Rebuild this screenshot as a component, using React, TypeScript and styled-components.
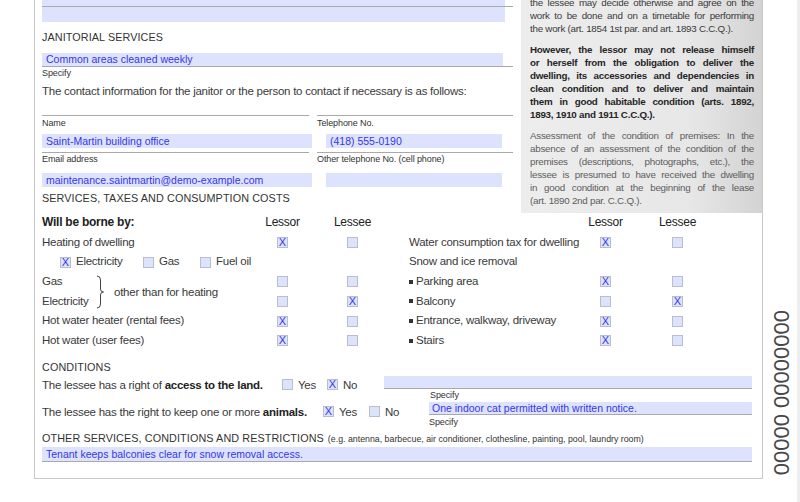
import styled, { createGlobalStyle } from "styled-components";

const SANS = `'Liberation Sans', Arial, sans-serif`;
const FIELD_BG = "#dde3fd";
const INK = "#3535ea";
const RULE = "#a9a9a9";

const GlobalStyle = createGlobalStyle`
  * { box-sizing: border-box; }
  html, body { margin: 0; padding: 0; background: #fff; }
  body {
    font-family: ${SANS};
    color: #3a3a3a;
    font-size: 11.5px;
    letter-spacing: -0.25px;
  }
  b { font-weight: 700; color: #222; }
`;

const Page = styled.div`
  display: flex;
  height: 502px;
  overflow: hidden;
`;

const Sheet = styled.div`
  margin-left: 34px;
  width: 729px;
  align-self: flex-start;
  border: 1px solid #c9c9c9;
  border-top: none;
  padding: 0 0 16px 7px;
`;

const Top = styled.div`
  display: flex;
  gap: 8px;
`;

const LeftCol = styled.div`
  width: 471px;
  display: flex;
  flex-direction: column;
`;

const Aside = styled.aside`
  width: 241px;
  height: 213px;
  overflow: hidden;
  background: linear-gradient(to right, #ededed 0%, #e7e7e7 70%, #d3d3d3 100%);
  padding: 0 8px 0 9px;
  font-size: 9.8px;
  letter-spacing: -0.25px;
  line-height: 13px;
`;

const Para = styled.div<{ $tone: "plain" | "bold" | "muted" }>`
  margin-top: 8px;
  color: ${(p) => (p.$tone === "muted" ? "#5c5c5c" : p.$tone === "bold" ? "#262626" : "#3a3a3a")};
  font-weight: ${(p) => (p.$tone === "bold" ? 700 : 400)};
  &:first-child {
    margin-top: -4px;
  }
`;

const Line = styled.div<{ $last?: boolean }>`
  text-align: justify;
  text-align-last: ${(p) => (p.$last ? "left" : "justify")};
`;

const Heading = styled.div<{ $lh: number; $mt?: number }>`
  font-size: 10.8px;
  letter-spacing: 0.1px;
  text-transform: uppercase;
  color: #333;
  line-height: ${(p) => p.$lh}px;
  margin-top: ${(p) => p.$mt ?? 0}px;
  white-space: nowrap;
`;

const Note = styled.span`
  font-size: 8.8px;
  letter-spacing: 0;
  text-transform: none;
  margin-left: 4px;
`;

const Underlined = styled.div<{ $w?: number }>`
  width: ${(p) => (p.$w ? `${p.$w}px` : "auto")};
  border-bottom: 1px solid ${RULE};
`;

const Field = styled.div<{ $w?: number; $h?: number; $indent?: number; $pad?: number }>`
  width: ${(p) => (p.$w ? `${p.$w}px` : "auto")};
  height: ${(p) => p.$h ?? 14}px;
  margin-left: ${(p) => p.$indent ?? 0}px;
  padding-left: ${(p) => p.$pad ?? 4}px;
  background: ${FIELD_BG};
  font-size: 10.5px;
  letter-spacing: 0;
  line-height: ${(p) => p.$h ?? 14}px;
  color: ${INK};
  white-space: nowrap;
  overflow: hidden;
`;

const Caption = styled.div<{ $lh?: number; $indent?: number; $mt?: number }>`
  font-size: 9px;
  letter-spacing: -0.1px;
  color: #333;
  line-height: ${(p) => p.$lh ?? 12}px;
  padding-left: ${(p) => p.$indent ?? 0}px;
  margin-top: ${(p) => p.$mt ?? 0}px;
  white-space: nowrap;
`;

const Sentence = styled.div<{ $lh?: number; $w?: number }>`
  line-height: ${(p) => p.$lh ?? 20}px;
  width: ${(p) => (p.$w ? `${p.$w}px` : "auto")};
  flex: none;
  white-space: nowrap;
`;

const ContactGrid = styled.div`
  display: grid;
  grid-template-columns: 267px 196px;
  column-gap: 8px;
  row-gap: 4px;
  margin-top: 12px;
`;

const ContactCell = styled.div<{ $top: number; $gap: number }>`
  border-top: 1px solid ${RULE};
  display: flex;
  flex-direction: column;
  padding-top: ${(p) => p.$top}px;
  gap: ${(p) => p.$gap}px;
`;

const Borne = styled.div`
  display: flex;
  gap: 27px;
`;

const Table = styled.div<{ $cols: string }>`
  display: grid;
  grid-template-columns: ${(p) => p.$cols};
  grid-auto-rows: 19.67px;
  align-items: center;
`;

const Cell = styled.div<{ $head?: boolean; $bold?: boolean; $span?: boolean }>`
  line-height: 19.67px;
  white-space: nowrap;
  color: ${(p) => (p.$head ? "#222" : "#3a3a3a")};
  font-size: ${(p) => (p.$head ? "12px" : "11.5px")};
  font-weight: ${(p) => (p.$bold ? 700 : 400)};
  grid-column: ${(p) => (p.$span ? "1 / -1" : "auto")};
  display: flex;
  align-items: center;
  justify-content: ${(p) => (p.$head && !p.$bold ? "center" : "flex-start")};
`;

const CheckCell = styled.div`
  display: flex;
  justify-content: center;
  align-items: center;
`;

const Box = styled.span`
  display: inline-flex;
  align-items: center;
  justify-content: center;
  flex: none;
  width: 11px;
  height: 11px;
  background: ${FIELD_BG};
  border: 1px solid #babdcc;
  font-size: 11px;
  letter-spacing: 0;
  line-height: 1;
  color: ${INK};
`;

const Option = styled.span<{ $w?: number }>`
  display: inline-flex;
  align-items: center;
  gap: 5px;
  flex: none;
  width: ${(p) => (p.$w ? `${p.$w}px` : "auto")};
  white-space: nowrap;
`;

const SubOptions = styled.div`
  grid-column: 1 / -1;
  display: flex;
  align-items: center;
  padding-left: 18px;
  line-height: 19.67px;
`;

const BraceGroup = styled.div`
  grid-row: span 2;
  display: flex;
  align-items: center;
  height: 100%;
`;

const BraceNames = styled.div`
  width: 54px;
  display: flex;
  flex-direction: column;
  line-height: 19.67px;
`;

const BraceText = styled.span`
  margin-left: 10px;
  white-space: nowrap;
`;

const Bullet = styled.span`
  width: 4px;
  height: 4px;
  background: #333;
  margin-right: 3px;
  flex: none;
`;

const Lower = styled.div`
  padding-right: 10px;
`;

const CondRow = styled.div`
  display: flex;
  align-items: flex-start;
`;

const Options = styled.div<{ $h: number }>`
  display: flex;
  align-items: center;
  height: ${(p) => p.$h}px;
`;

const FieldCol = styled.div<{ $gap: number }>`
  flex: 1;
  margin-left: ${(p) => p.$gap}px;
  display: flex;
  flex-direction: column;
`;

const Side = styled.div`
  width: 24px;
  margin-left: 7px;
  display: flex;
  flex-direction: column;
  justify-content: flex-end;
  padding-bottom: 27px;
`;

const Vertical = styled.div`
  writing-mode: vertical-rl;
  transform: rotate(180deg);
  font-size: 22px;
  letter-spacing: 0;
  line-height: 24px;
  color: #474747;
  white-space: nowrap;
`;

const Strip = styled.div`
  margin-left: auto;
  width: 3px;
  background: #eeeeee;
`;

function Check({ on }: { on?: boolean }) {
  return <Box>{on ? "X" : ""}</Box>;
}

function Brace() {
  return (
    <svg width="8" height="34" viewBox="0 0 8 34" fill="none" stroke="#444" strokeWidth="1">
      <path d="M1 1 Q4.5 1 4.5 5 L4.5 14 Q4.5 17 7.5 17 Q4.5 17 4.5 20 L4.5 29 Q4.5 33 1 33" />
    </svg>
  );
}

type Row = { label: string; bullet?: boolean; lessor?: boolean; lessee?: boolean; noBoxes?: boolean };

const rightRows: Row[] = [
  { label: "Water consumption tax for dwelling", lessor: true },
  { label: "Snow and ice removal", noBoxes: true },
  { label: "Parking area", bullet: true, lessor: true },
  { label: "Balcony", bullet: true, lessee: true },
  { label: "Entrance, walkway, driveway", bullet: true, lessor: true },
  { label: "Stairs", bullet: true, lessor: true },
];

function TableRow({ row }: { row: Row }) {
  if (row.noBoxes) return <Cell $span>{row.label}</Cell>;
  return (
    <>
      <Cell>
        {row.bullet && <Bullet />}
        {row.label}
      </Cell>
      <CheckCell>
        <Check on={row.lessor} />
      </CheckCell>
      <CheckCell>
        <Check on={row.lessee} />
      </CheckCell>
    </>
  );
}

export default function App() {
  return (
    <>
      <GlobalStyle />
      <Page>
        <Sheet>
          <Top>
            <LeftCol>
              <Underlined $w={471}>
                <Field $w={463} $h={6} />
              </Underlined>
              <Field $w={463} $h={15} />
              <Heading $lh={30}>Janitorial services</Heading>
              <Underlined $w={471} style={{ marginTop: 1 }}>
                <Field $w={461} $h={13}>Common areas cleaned weekly</Field>
              </Underlined>
              <Caption>Specify</Caption>
              <Sentence $lh={24}>
                The contact information for the janitor or the person to contact if necessary is as follows:
              </Sentence>
              <ContactGrid>
                <ContactCell $top={1} $gap={5}>
                  <Caption>Name</Caption>
                  <Field $w={270}>Saint-Martin building office</Field>
                </ContactCell>
                <ContactCell $top={1} $gap={5}>
                  <Caption>Telephone No.</Caption>
                  <Field $w={176} $indent={9}>(418) 555-0190</Field>
                </ContactCell>
                <ContactCell $top={0} $gap={8}>
                  <Caption>Email address</Caption>
                  <Field $w={270}>maintenance.saintmartin@demo-example.com</Field>
                </ContactCell>
                <ContactCell $top={0} $gap={8}>
                  <Caption>Other telephone No. (cell phone)</Caption>
                  <Field $w={176} $indent={9} />
                </ContactCell>
              </ContactGrid>
              <Heading $lh={22}>Services, taxes and consumption costs</Heading>
            </LeftCol>
            <Aside>
              <Para $tone="plain">
                <Line>the lessee may decide otherwise and agree on the</Line>
                <Line>work to be done and on a timetable for performing</Line>
                <Line $last>the work (art. 1854 1st par. and art. 1893 C.C.Q.).</Line>
              </Para>
              <Para $tone="bold">
                <Line>However, the lessor may not release himself</Line>
                <Line>or herself from the obligation to deliver the</Line>
                <Line>dwelling, its accessories and dependencies in</Line>
                <Line>clean condition and to deliver and maintain</Line>
                <Line>them in good habitable condition (arts. 1892,</Line>
                <Line $last>1893, 1910 and 1911 C.C.Q.).</Line>
              </Para>
              <Para $tone="muted">
                <Line>Assessment of the condition of premises: In the</Line>
                <Line>absence of an assessment of the condition of the</Line>
                <Line>premises (descriptions, photographs, etc.), the</Line>
                <Line>lessee is presumed to have received the dwelling</Line>
                <Line>in good condition at the beginning of the lease</Line>
                <Line $last>(art. 1890 2nd par. C.C.Q.).</Line>
              </Para>
            </Aside>
          </Top>

          <Borne>
            <Table $cols="200px 81px 59px">
              <Cell $bold $head>
                Will be borne by:
              </Cell>
              <Cell $head>Lessor</Cell>
              <Cell $head>Lessee</Cell>
              <TableRow row={{ label: "Heating of dwelling", lessor: true }} />
              <SubOptions>
                <Option $w={83}>
                  <Check on />
                  Electricity
                </Option>
                <Option $w={57}>
                  <Check />
                  Gas
                </Option>
                <Option>
                  <Check />
                  Fuel oil
                </Option>
              </SubOptions>
              <BraceGroup>
                <BraceNames>
                  <span>Gas</span>
                  <span>Electricity</span>
                </BraceNames>
                <Brace />
                <BraceText>other than for heating</BraceText>
              </BraceGroup>
              <CheckCell>
                <Check />
              </CheckCell>
              <CheckCell>
                <Check />
              </CheckCell>
              <CheckCell>
                <Check />
              </CheckCell>
              <CheckCell>
                <Check on />
              </CheckCell>
              <TableRow row={{ label: "Hot water heater (rental fees)", lessor: true }} />
              <TableRow row={{ label: "Hot water (user fees)", lessor: true }} />
            </Table>
            <Table $cols="161px 71px 73px">
              <Cell />
              <Cell $head>Lessor</Cell>
              <Cell $head>Lessee</Cell>
              {rightRows.map((r) => (
                <TableRow key={r.label} row={r} />
              ))}
            </Table>
          </Borne>

          <Lower>
            <Heading $lh={18} $mt={7}>
              Conditions
            </Heading>
            <CondRow>
              <Sentence $lh={18} $w={240}>
                The lessee has a right of <b>access to the land.</b>
              </Sentence>
              <Options $h={18}>
                <Option $w={45}>
                  <Check />
                  Yes
                </Option>
                <Option $w={45}>
                  <Check on />
                  No
                </Option>
              </Options>
              <FieldCol $gap={12}>
                <Underlined>
                  <Field $h={12} />
                </Underlined>
                <Caption $lh={13} $indent={46}>
                  Specify
                </Caption>
              </FieldCol>
            </CondRow>
            <CondRow>
              <Sentence $lh={20} $w={281}>
                The lessee has the right to keep one or more <b>animals.</b>
              </Sentence>
              <Options $h={20}>
                <Option $w={46}>
                  <Check on />
                  Yes
                </Option>
                <Option $w={46}>
                  <Check />
                  No
                </Option>
              </Options>
              <FieldCol $gap={14}>
                <Underlined>
                  <Field $h={12} $pad={3}>
                    One indoor cat permitted with written notice.
                  </Field>
                </Underlined>
                <Caption $lh={11} $mt={2}>
                  Specify
                </Caption>
              </FieldCol>
            </CondRow>
            <Heading $lh={16} $mt={2}>
              Other services, conditions and restrictions
              <Note>(e.g. antenna, barbecue, air conditioner, clothesline, painting, pool, laundry room)</Note>
            </Heading>
            <Underlined>
              <Field $h={14}>Tenant keeps balconies clear for snow removal access.</Field>
            </Underlined>
          </Lower>
        </Sheet>
        <Side>
          <Vertical>00000 00000000</Vertical>
        </Side>
        <Strip />
      </Page>
    </>
  );
}
